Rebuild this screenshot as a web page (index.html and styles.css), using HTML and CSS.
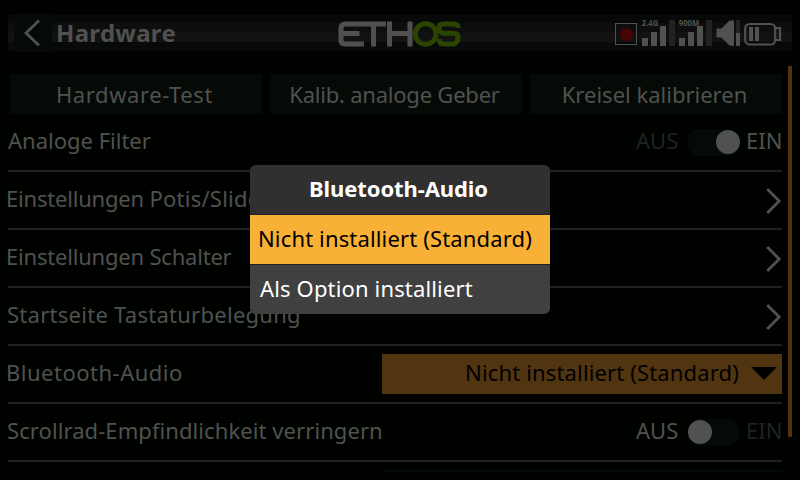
FILE: index.html
```html
<!DOCTYPE html>
<html lang="de">
<head>
<meta charset="utf-8">
<title>Hardware</title>
<link rel="stylesheet" href="styles.css">
</head>
<body>
<div class="screen">
  <header class="topbar">
    <div class="back">
      <svg width="38" height="38" viewBox="0 0 38 38"><path d="M25 6.500 12 19l13 12.500"/></svg>
    </div>
    <h1 class="title">Hardware</h1>
    <svg class="logo" width="124" height="26" viewBox="0 0 124 26">
      <path class="logo-light" d="M26 23H7q-4 0-4-4V7.500Q3 3 7.500 3H48M3 12.500H21.500M35.500 3V25.500M51.500 .5V25.500M72 .5V25.500M51.500 12.500H72"/>
      <ellipse class="logo-green" cx="87.700" cy="13" rx="10.400" ry="10.200"/>
      <path class="logo-green" d="M120 7V6.500Q120 3 116 3H105.500Q101 3 101 7.200T105.500 12.200H115.500Q120 12.200 120 17T115.500 23H105.500Q101 23 101 18"/>
    </svg>
    <svg class="status" width="168" height="28" viewBox="0 0 168 28">
      <rect class="outline" x="1.500" y="4.500" width="21" height="21"/>
      <circle class="record" cx="12.500" cy="15.500" r="6.500"/>
      <text x="27.800" y="7.400" textLength="16.500" lengthAdjust="spacingAndGlyphs">2.4G</text>
      <g class="fill"><path d="M28 19h6v8h-6zM37 13h6v14h-6zM46 7h6v20h-6z"/></g>
      <path class="faint" d="M55 1h6v26h-6z"/>
      <text x="64.800" y="7.400" textLength="20.500" lengthAdjust="spacingAndGlyphs">900M</text>
      <g class="fill"><path d="M65 19h6v8h-6zM74 13h6v14h-6zM83 7h6v20h-6z"/></g>
      <path class="faint" d="M92 1h6v26h-6z"/>
      <path class="fill" d="M102.500 9.500h5L115 2q1-.8 5-.8V27q-4 0-5-.8l-7.500-7.700h-5z"/>
      <path class="faint" d="M122 1h4v13h-4z"/>
      <path class="fill" d="M122 14h4v13h-4zM135 8h4v14h-4zM141 8h4v14h-4z"/>
      <rect class="battery" x="131.200" y="5" width="30" height="20.500" rx="4.500"/>
      <path class="battery" d="M161.500 9h4.500v12h-4.500"/>
    </svg>
  </header>

  <main class="viewport">
    <div class="content">
      <div class="buttons">
        <button class="button wide">Hardware-Test</button>
        <button class="button tight">Kalib. analoge Geber</button>
        <button class="button">Kreisel kalibrieren</button>
      </div>
      <div class="row">
        <span class="label">Analoge Filter</span>
        <span class="switch on"><span class="off-text">AUS</span><span class="track"><i class="knob"></i></span><span class="on-text">EIN</span></span>
      </div>
      <div class="row">
        <span class="label settings">Einstellungen <span class="pots">Potis/Slider</span></span>
        <svg class="chevron" width="18" height="30" viewBox="0 0 18 30"><path d="M3.200 3 15.200 15 3.200 27"/></svg>
      </div>
      <div class="row">
        <span class="label settings">Einstellungen Schalter</span>
        <svg class="chevron" width="18" height="30" viewBox="0 0 18 30"><path d="M3.200 3 15.200 15 3.200 27"/></svg>
      </div>
      <div class="row">
        <span class="label keys">Startseite Tastaturbelegung</span>
        <svg class="chevron" width="18" height="30" viewBox="0 0 18 30"><path d="M3.200 3 15.200 15 3.200 27"/></svg>
      </div>
      <div class="row">
        <span class="label bluetooth">Bluetooth-Audio</span>
        <span class="select"><span class="value">Nicht installiert (Standard)</span><i class="arrow"></i></span>
      </div>
      <div class="row">
        <span class="label wheel">Scrollrad-Empfindlichkeit verringern</span>
        <span class="switch"><span class="off-text">AUS</span><span class="track"><i class="knob"></i></span><span class="on-text">EIN</span></span>
      </div>
      <div class="row">
        <span class="label"></span>
        <span class="select idle"></span>
      </div>
    </div>
    <div class="scrollbar"></div>
  </main>

  <section class="dialog">
    <h2 class="dialog-title">Bluetooth-Audio</h2>
    <div class="option selected">Nicht installiert (Standard)</div>
    <div class="option last">Als Option installiert</div>
  </section>
</div>
</body>
</html>
```
FILE: styles.css
```css
* { box-sizing: border-box; }

body {
  margin: 0;
  background: #000200;
  font-family: "Noto Sans", sans-serif;
  font-size: 22px;
  color: #4f524f;
}

.screen {
  position: relative;
  width: 800px;
  height: 480px;
  padding: 8px 8px 0 4px;
  overflow: hidden;
  white-space: nowrap;
}

.topbar {
  display: flex;
  align-items: center;
  height: 50px;
  margin-left: 4px;
  padding-left: 6px;
  background: linear-gradient(#000100 0 7px, #070908 7px 15px, #0d0e0d 15px 24px, #111211 24px 34px, #080a09 34px 43px, #000100 43px);
}

.back { width: 38px; height: 38px; background: #060a07; }
.back svg { display: block; }
.back path, .chevron path { fill: none; stroke: #4f524f; stroke-width: 2.8; }

.title {
  width: 286px;
  margin: 0;
  padding: 0 0 1px 4px;
  font-size: 24px;
  line-height: 49px;
  letter-spacing: 0.3px;
}

.logo { margin-top: 1px; }
.logo path, .logo ellipse { fill: none; stroke-width: 5; }
.logo-light { stroke: #505050; }
.logo-green { stroke: #2b4400; }

.status { margin-left: 152px; overflow: visible; }
.status text { font-size: 8.5px; font-weight: 700; fill: #4f524f; }
.outline { fill: none; stroke: #4f524f; }
.record { fill: #490406; }
.fill { fill: #4f524f; }
.faint { fill: #202321; }
.battery { fill: none; stroke: #4f524f; stroke-width: 2.2; }

.viewport {
  display: flex;
  justify-content: space-between;
  height: 406px;
  margin-top: 8px;
}

.content {
  width: 778px;
  height: 406px;
  padding: 8px 0 0 4px;
  overflow: hidden;
}
.scrollbar { width: 4px; height: 371px; background: #503510; }

.buttons {
  display: grid;
  grid-template-columns: repeat(3, 252px);
  gap: 8px;
  height: 40px;
  padding-left: 2px;
}

.button {
  height: 40px;
  padding: 0 3px 0 0;
  border: 0;
  background: #060a07;
  color: inherit;
  font: inherit;
  line-height: 40px;
}
.wide { letter-spacing: 0.6px; }
.tight { letter-spacing: -0.22px; }

.row {
  display: flex;
  align-items: center;
  justify-content: space-between;
  height: 58px;
  border-bottom: 2px solid #1f2220;
}

.label { padding-bottom: 4px; }
.settings { margin-left: -2px; letter-spacing: -0.2px; }
.pots { letter-spacing: 0.25px; }
.keys { margin-left: -1px; letter-spacing: 0.27px; }
.bluetooth { margin-left: -2px; letter-spacing: 0.5px; }
.wheel { margin-left: -1px; letter-spacing: 0.08px; }

.chevron { margin-top: 2px; }

.switch { display: flex; align-items: center; height: 56px; }
.off-text, .on-text { padding-bottom: 4px; }
.off-text { width: 51px; }
.on-text { width: 36px; }
.track {
  display: flex;
  width: 53px;
  height: 27px;
  margin-right: 6px;
  padding: 1.500px 0.500px 1.500px 1px;
  border-radius: 14px;
  background: #060a07;
}
.knob { width: 24px; height: 24px; border-radius: 50%; background: #4f524f; }
.on .track { justify-content: flex-end; }
.on .off-text, .switch:not(.on) .on-text { color: #1f2220; }

.select {
  display: flex;
  align-items: center;
  justify-content: flex-end;
  width: 400px;
  height: 40px;
  padding-right: 5px;
  background: #503510;
  color: #000;
  letter-spacing: 0.15px;
}
.value { padding-bottom: 4px; }
.idle { background: #060a07; }
.arrow {
  margin: 0 0 1px 12px;
  border: 13px solid transparent;
  border-top-color: #000;
  border-bottom: 0;
}

.dialog {
  position: absolute;
  left: 250px;
  top: 165px;
  width: 300px;
  border-radius: 6px;
  overflow: hidden;
  background: #222;
  color: #fff;
}
.dialog-title {
  height: 49px;
  margin: 0 0 1px;
  padding-right: 3px;
  background: #303030;
  font-size: 22px;
  line-height: 46px;
  letter-spacing: -0.1px;
  text-align: center;
}
.option { height: 49px; padding-left: 10px; background: #404040; line-height: 46px; }
.selected {
  margin-bottom: 1px;
  padding-left: 8px;
  background: #f9b036;
  color: #000;
  letter-spacing: 0.15px;
}
.last { letter-spacing: 0.15px; }
```
